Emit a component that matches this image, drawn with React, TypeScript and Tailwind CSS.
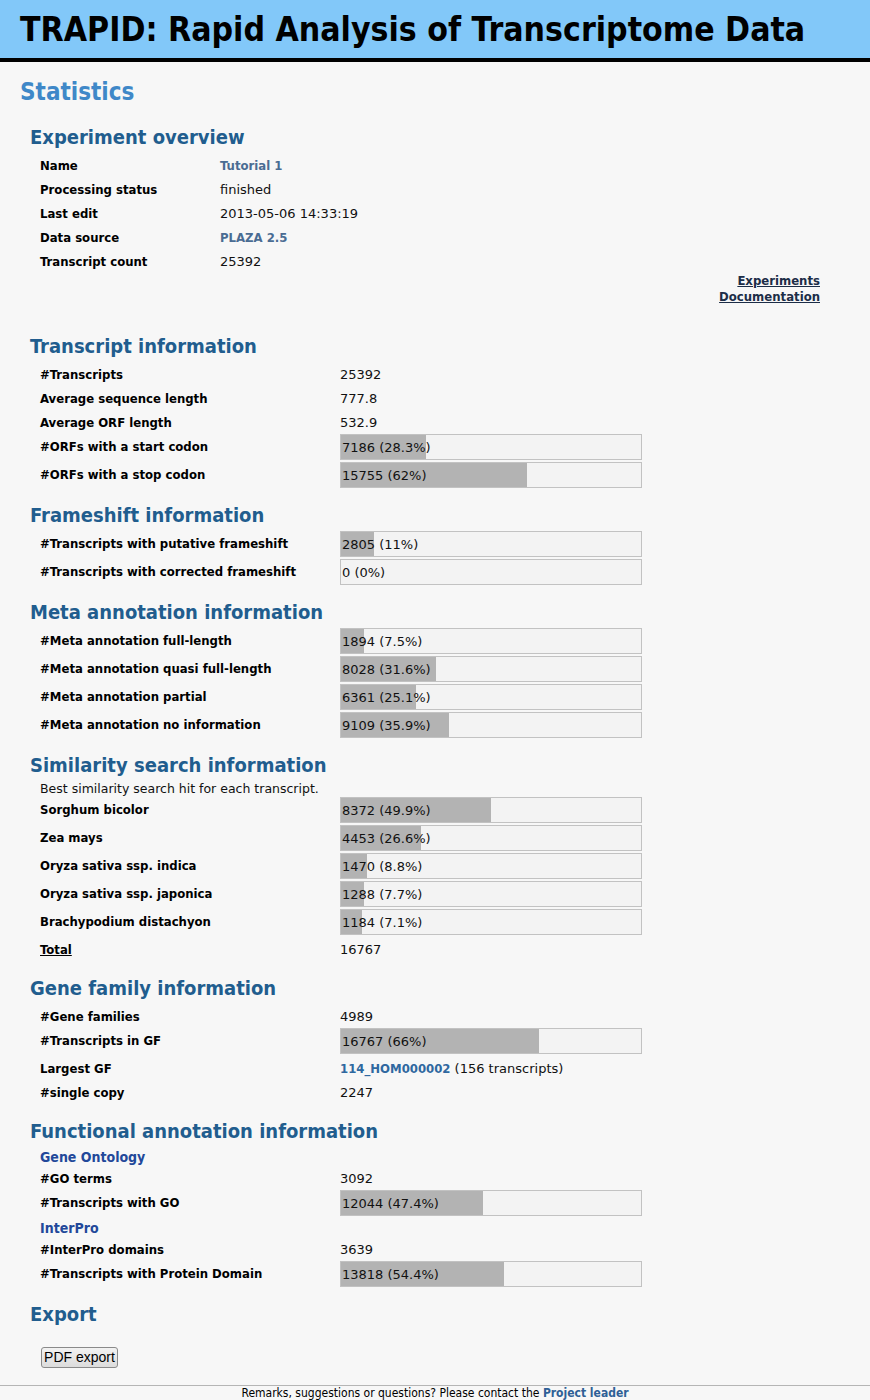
import React from 'react';

type Item =
  | { kind: 'text'; label: string; value: React.ReactNode; underline?: boolean }
  | { kind: 'bar'; label: string; text: string; pct: number }
  | { kind: 'sub'; label: string };

const Bar = ({ text, pct }: { text: string; pct: number }) => (
  <div className="relative h-[26px] w-[302px] border border-[#c2c2c2] bg-[#f3f3f3]">
    <div className="absolute left-0 top-0 h-full bg-[#b3b3b3]" style={{ width: `${pct * 3}px` }} />
    <span className="relative block pl-[1px] leading-[25px]">{text}</span>
  </div>
);

const Rows = ({ items, labelWidth = 300 }: { items: Item[]; labelWidth?: number }) => (
  <div className="pl-[20px]">
    {items.map((it, i) => {
      if (it.kind === 'sub') {
        return (
          <div
            key={i}
            className="h-[19px] font-['DejaVu_Sans_Condensed','DejaVu_Sans',sans-serif] text-[14px] font-bold leading-[20px] text-[#22489a]"
          >
            {it.label}
          </div>
        );
      }
      return (
        <div key={i} className={`flex ${it.kind === 'bar' ? 'h-[28px]' : 'h-[24px] items-center pt-[1px]'}`}>
          <div
            className={`shrink-0 font-['DejaVu_Sans_Condensed','DejaVu_Sans',sans-serif] font-bold text-black ${
              it.kind === 'bar' ? 'leading-[26px]' : ''
            } ${it.kind === 'text' && it.underline ? 'underline' : ''}`}
            style={{ width: labelWidth }}
          >
            {it.label}
          </div>
          {it.kind === 'bar' ? <Bar text={it.text} pct={it.pct} /> : <div>{it.value}</div>}
        </div>
      );
    })}
  </div>
);

const Heading = ({ children, className = '' }: { children: React.ReactNode; className?: string }) => (
  <h3
    className={`ml-[10px] pb-[6px] font-['DejaVu_Sans_Condensed','DejaVu_Sans',sans-serif] text-[20px] font-bold leading-[20px] text-[#215d8e] ${className}`}
  >
    {children}
  </h3>
);

export default function App() {
  return (
    <div className="flex min-h-[1400px] flex-col bg-[#f7f7f7] font-['DejaVu_Sans',Verdana,sans-serif] text-[13px] text-[#111]">
      <header className="flex h-[62px] items-center border-b-4 border-black bg-[#82c8f9] px-[20px]">
        <h1 className="pt-[2px] font-['DejaVu_Sans_Condensed','Liberation_Sans',sans-serif] text-[33.5px] font-bold leading-[58px] text-black">
          TRAPID: Rapid Analysis of Transcriptome Data
        </h1>
      </header>

      <main className="px-[20px]">
        <h2 className="pt-[18px] font-['DejaVu_Sans_Condensed','DejaVu_Sans',sans-serif] text-[24px] font-bold leading-[24px] text-[#3f88c8]">
          Statistics
        </h2>

        <Heading className="pt-[23px]">Experiment overview</Heading>
        <Rows
          labelWidth={180}
          items={[
            {
              kind: 'text',
              label: 'Name',
              value: <span className="font-['DejaVu_Sans_Condensed'] font-bold text-[#4a6c93]">Tutorial 1</span>,
            },
            { kind: 'text', label: 'Processing status', value: 'finished' },
            { kind: 'text', label: 'Last edit', value: '2013-05-06 14:33:19' },
            {
              kind: 'text',
              label: 'Data source',
              value: <span className="font-['DejaVu_Sans_Condensed'] font-bold text-[#4a6c93]">PLAZA 2.5</span>,
            },
            { kind: 'text', label: 'Transcript count', value: '25392' },
          ]}
        />
        <div className="mr-[30px] flex flex-col items-end font-['DejaVu_Sans_Condensed','DejaVu_Sans',sans-serif] font-bold leading-[16px] text-[#1c2d47]">
          <a className="underline">Experiments</a>
          <a className="underline">Documentation</a>
        </div>

        <Heading className="pt-[31px]">Transcript information</Heading>
        <Rows
          items={[
            { kind: 'text', label: '#Transcripts', value: '25392' },
            { kind: 'text', label: 'Average sequence length', value: '777.8' },
            { kind: 'text', label: 'Average ORF length', value: '532.9' },
            { kind: 'bar', label: '#ORFs with a start codon', text: '7186 (28.3%)', pct: 28.3 },
            { kind: 'bar', label: '#ORFs with a stop codon', text: '15755 (62%)', pct: 62 },
          ]}
        />

        <Heading className="pt-[15px]">Frameshift information</Heading>
        <Rows
          items={[
            { kind: 'bar', label: '#Transcripts with putative frameshift', text: '2805 (11%)', pct: 11 },
            { kind: 'bar', label: '#Transcripts with corrected frameshift', text: '0 (0%)', pct: 0 },
          ]}
        />

        <Heading className="pt-[15px]">Meta annotation information</Heading>
        <Rows
          items={[
            { kind: 'bar', label: '#Meta annotation full-length', text: '1894 (7.5%)', pct: 7.5 },
            { kind: 'bar', label: '#Meta annotation quasi full-length', text: '8028 (31.6%)', pct: 31.6 },
            { kind: 'bar', label: '#Meta annotation partial', text: '6361 (25.1%)', pct: 25.1 },
            { kind: 'bar', label: '#Meta annotation no information', text: '9109 (35.9%)', pct: 35.9 },
          ]}
        />

        <Heading className="pt-[15px]">Similarity search information</Heading>
        <p className="pl-[20px] text-[12.5px] leading-[16px]">Best similarity search hit for each transcript.</p>
        <Rows
          items={[
            { kind: 'bar', label: 'Sorghum bicolor', text: '8372 (49.9%)', pct: 49.9 },
            { kind: 'bar', label: 'Zea mays', text: '4453 (26.6%)', pct: 26.6 },
            { kind: 'bar', label: 'Oryza sativa ssp. indica', text: '1470 (8.8%)', pct: 8.8 },
            { kind: 'bar', label: 'Oryza sativa ssp. japonica', text: '1288 (7.7%)', pct: 7.7 },
            { kind: 'bar', label: 'Brachypodium distachyon', text: '1184 (7.1%)', pct: 7.1 },
            { kind: 'text', label: 'Total', value: '16767', underline: true },
          ]}
        />

        <Heading className="pt-[17px]">Gene family information</Heading>
        <Rows
          items={[
            { kind: 'text', label: '#Gene families', value: '4989' },
            { kind: 'bar', label: '#Transcripts in GF', text: '16767 (66%)', pct: 66 },
            {
              kind: 'text',
              label: 'Largest GF',
              value: (
                <span>
                  <span className="font-['DejaVu_Sans_Condensed'] font-bold text-[#2f68a0]">114_HOM000002</span> (156
                  transcripts)
                </span>
              ),
            },
            { kind: 'text', label: '#single copy', value: '2247' },
          ]}
        />

        <Heading className="pt-[17px]">Functional annotation information</Heading>
        <Rows
          items={[
            { kind: 'sub', label: 'Gene Ontology' },
            { kind: 'text', label: '#GO terms', value: '3092' },
            { kind: 'bar', label: '#Transcripts with GO', text: '12044 (47.4%)', pct: 47.4 },
            { kind: 'sub', label: 'InterPro' },
            { kind: 'text', label: '#InterPro domains', value: '3639' },
            { kind: 'bar', label: '#Transcripts with Protein Domain', text: '13818 (54.4%)', pct: 54.4 },
          ]}
        />

        <Heading className="pt-[15px]">Export</Heading>
        <div className="pl-[21px] pt-[17px]">
          <button className="h-[21px] w-[77px] rounded-[3px] border border-[#8a8a8a] bg-gradient-to-b from-[#f2f2f2] to-[#dcdcdc] font-['Liberation_Sans',Arial,sans-serif] text-[14px] leading-[19px] text-black">
            PDF export
          </button>
        </div>
      </main>

      <footer className="mt-[17px] border-t border-[#b5b5b5] text-center font-['DejaVu_Sans_Condensed','DejaVu_Sans',sans-serif] text-[12px] leading-[14px] text-black">
        Remarks, suggestions or questions? Please contact the{' '}
        <a className="font-bold text-[#2e6096]">Project leader</a>
      </footer>
    </div>
  );
}
